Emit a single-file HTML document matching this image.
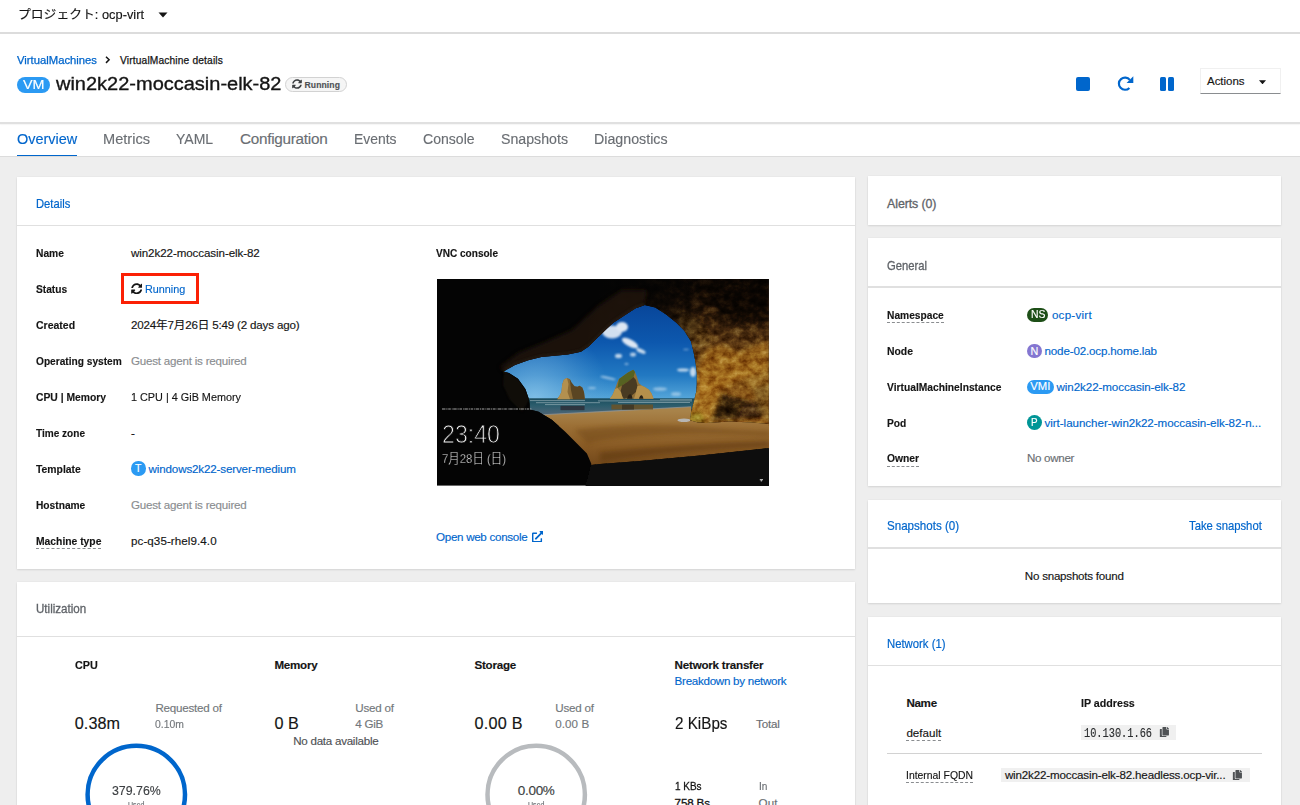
<!DOCTYPE html>
<html lang="ja"><head><meta charset="utf-8"><title>win2k22-moccasin-elk-82 · VirtualMachine details</title>
<style>
html,body{margin:0;padding:0;}
body{width:1300px;height:805px;position:relative;overflow:hidden;background:#fff;font-family:"Liberation Sans","Noto Sans CJK JP",sans-serif;}
body div,body .t,body svg{position:absolute;}
.t{line-height:1;white-space:nowrap;-webkit-text-stroke:.15px;}
</style></head>
<body>
<header>
<div style="left:0px;top:0px;width:1300px;height:32px;background:#fff;"></div>
<div style="left:0px;top:32px;width:1300px;height:1.5px;background:#dcdcdc;"></div>
<span id="t0" class="t" style="top:9.32px;font-size:12.1px;color:#151515;left:18px;transform:scaleX(1.0594);transform-origin:0 50%;">プロジェクト: ocp-virt</span>
<svg style="left:158px;top:12px" width="10" height="6" viewBox="0 0 10 6"><path d="M0.5 0.5h9L5 5.5z" fill="#151515"/></svg>
<a id="t1" class="t" style="top:55.83px;font-size:10.2px;color:#0066cc;left:16.6px;transform:scaleX(1.1065);transform-origin:0 50%;-webkit-text-stroke:.25px;">VirtualMachines</a>
<svg style="left:105px;top:56.300px" width="6" height="9" viewBox="0 0 6 9"><path d="M1 .7l3.100 3.100L1 6.900" fill="none" stroke="#151515" stroke-width="1.500"/></svg>
<span id="t2" class="t" style="top:55.83px;font-size:10.2px;color:#151515;left:120px;letter-spacing:0.160px;-webkit-text-stroke:.25px;">VirtualMachine details</span>
<div style="left:16.600px;top:76.500px;width:33px;height:16px;border-radius:8px;background:#2b9af3"></div>
<span id="t3" class="t" style="top:78.25px;font-size:13px;color:#fff;left:22.5px;transform:scaleX(1.1026);transform-origin:0 50%;">VM</span>
<span id="t4" class="t" style="top:73.58px;font-size:19.2px;color:#151515;left:55.5px;transform:scaleX(1.0416);transform-origin:0 50%;-webkit-text-stroke:0.35px #151515;">win2k22-moccasin-elk-82</span>
<div style="left:285.2px;top:76.700px;width:59.500px;height:13px;border-radius:8px;background:#f5f5f5;border:1px solid #d2d2d2"></div>
<span id="t5" class="t" style="top:81.19px;font-size:8.6px;color:#4f5255;left:304.5px;font-weight:700;letter-spacing:0.094px;">Running</span>
<svg style="left:291.600px;top:79px" width="10" height="10" viewBox="0 0 512 512"><path fill="#3c3f42" d="M370.7 133.3C339.5 104 298.9 88 255.8 88c-77.5.1-144.3 53.2-162.8 126.900-1.300 5.400-6.100 9.200-11.700 9.200H24.100c-7.500 0-13.200-6.800-11.800-14.200C33.900 94.900 134.800 8 256 8c66.400 0 126.800 26.100 171.300 68.700L463 41c15.100-15.100 41-4.400 41 17v134c0 13.300-10.700 24-24 24H346c-21.400 0-32.100-25.900-17-41l41.700-41.700zM32 296h134c21.400 0 32.100 25.900 17 41l-41.800 41.700c31.300 29.300 71.800 45.300 114.900 45.300 77.400-.1 144.300-53.100 162.800-126.800 1.300-5.400 6.100-9.200 11.700-9.200h57.300c7.500 0 13.200 6.800 11.800 14.200C478.100 417.100 377.200 504 256 504c-66.400 0-126.800-26.100-171.300-68.700L49 471c-15.100 15.100-41 4.400-41-17V320c0-13.300 10.700-24 24-24z"/></svg>
<div style="left:1076.200px;top:77px;width:14.300px;height:13.500px;border-radius:2px;background:#0066cc"></div>
<svg style="left:1115px;top:74px" width="20" height="18" viewBox="0 0 20 18"><path d="M14.800 5.900A6.100 6.100 0 1 0 14.400 13.900" fill="none" stroke="#0066cc" stroke-width="2.200"/><path d="M18.300 2.200V8.900H11.600Z" fill="#0066cc"/></svg>
<div style="left:1159.700px;top:77px;width:5.900px;height:13.500px;border-radius:1.500px;background:#0066cc"></div>
<div style="left:1167.800px;top:77px;width:6px;height:13.500px;border-radius:1.500px;background:#0066cc"></div>
<div style="left:1200.300px;top:68.300px;width:80.300px;height:26.200px;background:#fff;border:1px solid #f0f0f0;border-bottom:1px solid #8a8d90;box-sizing:border-box"></div>
<span id="t6" class="t" style="top:75.52px;font-size:11.5px;color:#151515;left:1207px;letter-spacing:-0.031px;">Actions</span>
<svg style="left:1259px;top:79.500px" width="7" height="4.500" viewBox="0 0 10 6"><path d="M0 0h10L5 6z" fill="#151515"/></svg>
<div style="left:0px;top:122.4px;width:1300px;height:1.6px;background:#e0e0e0;box-shadow:0 1px 1px rgba(0,0,0,.04);"></div>
</header>
<nav>
<a id="t7" class="t" style="top:131.19px;font-size:15.3px;color:#0066cc;left:16.7px;transform:scaleX(0.9459);transform-origin:0 50%;">Overview</a>
<span id="t8" class="t" style="top:131.19px;font-size:15.3px;color:#6a6e73;left:103px;transform:scaleX(0.9534);transform-origin:0 50%;">Metrics</span>
<span id="t9" class="t" style="top:131.19px;font-size:15.3px;color:#6a6e73;left:176.4px;transform:scaleX(0.9153);transform-origin:0 50%;">YAML</span>
<span id="t10" class="t" style="top:131.19px;font-size:15.3px;color:#6a6e73;left:240px;letter-spacing:-0.277px;">Configuration</span>
<span id="t11" class="t" style="top:131.19px;font-size:15.3px;color:#6a6e73;left:354px;transform:scaleX(0.9088);transform-origin:0 50%;">Events</span>
<span id="t12" class="t" style="top:131.19px;font-size:15.3px;color:#6a6e73;left:423px;transform:scaleX(0.9194);transform-origin:0 50%;">Console</span>
<span id="t13" class="t" style="top:131.19px;font-size:15.3px;color:#6a6e73;left:501px;transform:scaleX(0.9267);transform-origin:0 50%;">Snapshots</span>
<span id="t14" class="t" style="top:131.19px;font-size:15.3px;color:#6a6e73;left:594.4px;transform:scaleX(0.9307);transform-origin:0 50%;">Diagnostics</span>
<div style="left:16.7px;top:154.6px;width:60.3px;height:1.9px;background:#0066cc;"></div>
<div style="left:0px;top:156.4px;width:1300px;height:1px;background:#dcdcdc;"></div>
</nav>
<main>
<div style="left:0px;top:157.3px;width:1300px;height:660px;background:#eeeeee;"></div>
<section>
<div style="left:16.7px;top:176.7px;width:838px;height:392.2px;background:#fff;box-shadow:0 1px 2px rgba(3,3,3,.10),0 0 2px rgba(3,3,3,.05);"></div>
<a id="t15" class="t" style="top:198.26px;font-size:12.4px;color:#0066cc;left:36.1px;transform:scaleX(0.9056);transform-origin:0 50%;-webkit-text-stroke:.2px #0066cc;">Details</a>
<div style="left:16.7px;top:225.0px;width:838px;height:1.4px;background:#e0e0e0;"></div>
<span id="t16" class="t" style="top:247.24px;font-size:11.6px;color:#151515;left:36px;font-weight:700;transform:scaleX(0.8835);transform-origin:0 50%;">Name</span>
<span id="t17" class="t" style="top:283.17px;font-size:11.6px;color:#151515;left:36px;font-weight:700;transform:scaleX(0.8776);transform-origin:0 50%;">Status</span>
<span id="t18" class="t" style="top:319.10px;font-size:11.6px;color:#151515;left:36px;font-weight:700;transform:scaleX(0.9057);transform-origin:0 50%;">Created</span>
<span id="t19" class="t" style="top:355.03px;font-size:11.6px;color:#151515;left:36px;font-weight:700;transform:scaleX(0.8761);transform-origin:0 50%;">Operating system</span>
<span id="t20" class="t" style="top:390.96px;font-size:11.6px;color:#151515;left:36px;font-weight:700;transform:scaleX(0.8916);transform-origin:0 50%;">CPU | Memory</span>
<span id="t21" class="t" style="top:426.89px;font-size:11.6px;color:#151515;left:36px;font-weight:700;transform:scaleX(0.8675);transform-origin:0 50%;">Time zone</span>
<span id="t22" class="t" style="top:462.82px;font-size:11.6px;color:#151515;left:36px;font-weight:700;transform:scaleX(0.8952);transform-origin:0 50%;">Template</span>
<span id="t23" class="t" style="top:498.75px;font-size:11.6px;color:#151515;left:36px;font-weight:700;transform:scaleX(0.8794);transform-origin:0 50%;">Hostname</span>
<span id="t24" class="t" style="top:534.68px;font-size:11.6px;color:#151515;left:36px;font-weight:700;transform:scaleX(0.8904);transform-origin:0 50%;">Machine type</span>
<div style="left:36px;top:547.5px;width:65.4px;height:0px;background:transparent;border-top:1px dashed #8a8d90;"></div>
<span id="t25" class="t" style="top:247.24px;font-size:11.6px;color:#151515;left:131px;letter-spacing:-0.092px;">win2k22-moccasin-elk-82</span>
<div style="left:121.100px;top:272.800px;width:78px;height:30.800px;box-sizing:border-box;border:3.600px solid #fb2005"></div>
<svg style="left:131px;top:283px" width="11.4" height="11.4" viewBox="0 0 512 512"><path fill="#151515" d="M370.7 133.3C339.5 104 298.9 88 255.8 88c-77.5.1-144.3 53.2-162.8 126.900-1.300 5.400-6.100 9.200-11.700 9.200H24.100c-7.500 0-13.200-6.800-11.800-14.200C33.900 94.900 134.800 8 256 8c66.400 0 126.800 26.100 171.300 68.700L463 41c15.100-15.100 41-4.400 41 17v134c0 13.300-10.700 24-24 24H346c-21.400 0-32.100-25.900-17-41l41.700-41.700zM32 296h134c21.400 0 32.100 25.900 17 41l-41.800 41.700c31.300 29.300 71.800 45.300 114.900 45.300 77.400-.1 144.300-53.100 162.800-126.800 1.300-5.400 6.100-9.200 11.700-9.200h57.300c7.500 0 13.200 6.800 11.800 14.200C478.100 417.100 377.200 504 256 504c-66.400 0-126.800-26.100-171.300-68.700L49 471c-15.100 15.100-41 4.400-41-17V320c0-13.300 10.700-24 24-24z"/></svg>
<a id="t26" class="t" style="top:283.17px;font-size:11.6px;color:#0066cc;left:144.9px;transform:scaleX(0.9328);transform-origin:0 50%;">Running</a>
<span id="t27" class="t" style="top:319.10px;font-size:11.6px;color:#151515;left:131px;letter-spacing:-0.178px;">2024年7月26日 5:49 (2 days ago)</span>
<span id="t28" class="t" style="top:355.03px;font-size:11.6px;color:#8a8d90;left:131px;letter-spacing:-0.219px;">Guest agent is required</span>
<span id="t29" class="t" style="top:390.96px;font-size:11.6px;color:#151515;left:131px;transform:scaleX(0.9347);transform-origin:0 50%;">1 CPU | 4 GiB Memory</span>
<span id="t30" class="t" style="top:426.89px;font-size:11.6px;color:#151515;left:131px;">-</span>
<div style="left:131px;top:461.4px;width:14.500px;height:14.500px;border-radius:50%;background:#2b9af3"></div>
<span id="t31" class="t" style="top:463.45px;font-size:10.5px;color:#fff;left:135px;">T</span>
<a id="t32" class="t" style="top:462.82px;font-size:11.6px;color:#0066cc;left:148.6px;letter-spacing:-0.147px;">windows2k22-server-medium</a>
<span id="t33" class="t" style="top:498.75px;font-size:11.6px;color:#8a8d90;left:131px;letter-spacing:-0.219px;">Guest agent is required</span>
<span id="t34" class="t" style="top:534.68px;font-size:11.6px;color:#151515;left:131px;letter-spacing:0.079px;">pc-q35-rhel9.4.0</span>
<span id="t35" class="t" style="top:247.85px;font-size:11px;color:#151515;left:436px;font-weight:700;transform:scaleX(0.9137);transform-origin:0 50%;">VNC console</span>
<svg style="left:437px;top:279px" width="331.8" height="206.6" viewBox="437 279 331.8 206.6" preserveAspectRatio="none">
<defs>
<linearGradient id="sky" x1="0" y1="305" x2="0" y2="399" gradientUnits="userSpaceOnUse"><stop offset="0" stop-color="#08469a"/><stop offset=".4" stop-color="#0d58ae"/><stop offset=".75" stop-color="#2279c2"/><stop offset="1" stop-color="#55a6da"/></linearGradient>
<radialGradient id="haze" cx="535" cy="398" r="75" gradientUnits="userSpaceOnUse"><stop offset="0" stop-color="#8cc6ea" stop-opacity=".75"/><stop offset=".55" stop-color="#6fb0de" stop-opacity=".4"/><stop offset="1" stop-color="#5aa2d6" stop-opacity="0"/></radialGradient>
<linearGradient id="sea" x1="0" y1="398.500" x2="0" y2="415" gradientUnits="userSpaceOnUse"><stop offset="0" stop-color="#1b4b5d"/><stop offset=".4" stop-color="#2a5c6c"/><stop offset=".7" stop-color="#3d6172"/><stop offset="1" stop-color="#4d6474"/></linearGradient>
<linearGradient id="sand" x1="0" y1="411" x2="0" y2="470" gradientUnits="userSpaceOnUse"><stop offset="0" stop-color="#a8834a"/><stop offset=".25" stop-color="#9c7036"/><stop offset=".6" stop-color="#885a24"/><stop offset="1" stop-color="#6e4519"/></linearGradient>
<linearGradient id="rockv" x1="0" y1="279" x2="0" y2="425" gradientUnits="userSpaceOnUse"><stop offset="0" stop-color="#070503"/><stop offset=".15" stop-color="#150e07"/><stop offset=".3" stop-color="#2e1f0f"/><stop offset=".45" stop-color="#5c401e"/><stop offset=".6" stop-color="#7a5624"/><stop offset=".8" stop-color="#8a6026"/><stop offset="1" stop-color="#8c6126"/></linearGradient>
<linearGradient id="fadeL" x1="545" y1="300" x2="700" y2="345" gradientUnits="userSpaceOnUse"><stop offset="0" stop-color="#040404" stop-opacity="1"/><stop offset=".3" stop-color="#040404" stop-opacity="1"/><stop offset=".45" stop-color="#040404" stop-opacity=".88"/><stop offset=".7" stop-color="#040404" stop-opacity=".6"/><stop offset="1" stop-color="#040404" stop-opacity="0"/></linearGradient>
<linearGradient id="isl" x1="0" y1="0" x2="1" y2="0"><stop offset="0" stop-color="#9a7a3c"/><stop offset=".5" stop-color="#7a5a2a"/><stop offset="1" stop-color="#8a6a3a"/></linearGradient>
<filter id="tex" x="0" y="0" width="100%" height="100%" color-interpolation-filters="sRGB"><feTurbulence type="fractalNoise" baseFrequency=".12 .14" numOctaves="4" seed="11" result="n"/><feColorMatrix in="n" type="matrix" values="1.15 0 0 0 -.03  1.15 0 0 0 -.11  1.15 0 0 0 -.24  0 0 0 0 1" result="g"/><feBlend mode="soft-light" in="g" in2="SourceGraphic" result="o"/><feComposite operator="in" in="o" in2="SourceGraphic"/></filter>
<filter id="b1" x="-20%" y="-20%" width="140%" height="140%"><feGaussianBlur stdDeviation="1.1"/></filter>
<filter id="b2" x="-20%" y="-20%" width="140%" height="140%"><feGaussianBlur stdDeviation="2.2"/></filter>
<filter id="b05" x="-10%" y="-10%" width="120%" height="120%"><feGaussianBlur stdDeviation=".45"/></filter>
<clipPath id="cave"><path clip-rule="evenodd" d="M437 279H768.8V485.6H437Z M503.5 371.5 L515.0 364.9 L528.2 360.3 L541.3 357.0 L554.5 355.7 L567.7 354.4 L580.9 351.7 L588.7 346.5 L598.0 337.3 L606.0 329.4 L613.2 322.8 L626.3 314.2 L635.6 308.3 L644.8 305.0 L655.3 307.6 L665.8 314.2 L676.4 322.8 L684.3 330.7 L690.9 341.2 L693.5 351.7 L695.5 362.3 L696.8 372.8 L696.8 384.0 L696.4 391.0 L694.0 401.0 L691.0 412.0 L689.9 420.3 L698.0 422.5 L706.0 423.0 L730.0 421.5 L752.0 422.5 L769.5 424.0 L769.5 448.0 L700.0 455.5 L640.0 461.0 L600.0 464.0 L591.3 465.0 L591.3 463.8 L586.9 453.5 L576.7 443.3 L565.0 431.5 L551.8 419.8 L538.6 411.8 L529.8 409.6 L529.6 404.0 L529.0 399.3 L525.4 389.0 L518.0 378.8 L509.0 373.0Z"/></clipPath>
<clipPath id="open"><path d="M503.5 371.5 L515.0 364.9 L528.2 360.3 L541.3 357.0 L554.5 355.7 L567.7 354.4 L580.9 351.7 L588.7 346.5 L598.0 337.3 L606.0 329.4 L613.2 322.8 L626.3 314.2 L635.6 308.3 L644.8 305.0 L655.3 307.6 L665.8 314.2 L676.4 322.8 L684.3 330.7 L690.9 341.2 L693.5 351.7 L695.5 362.3 L696.8 372.8 L696.8 384.0 L696.4 391.0 L694.0 401.0 L691.0 412.0 L689.9 420.3 L698.0 422.5 L706.0 423.0 L730.0 421.5 L752.0 422.5 L769.5 424.0 L769.5 448.0 L700.0 455.5 L640.0 461.0 L600.0 464.0 L591.3 465.0 L591.3 463.8 L586.9 453.5 L576.7 443.3 L565.0 431.5 L551.8 419.8 L538.6 411.8 L529.8 409.6 L529.6 404.0 L529.0 399.3 L525.4 389.0 L518.0 378.8 L509.0 373.0Z"/></clipPath>
</defs>
<rect x="437" y="279" width="331.8" height="206.6" fill="#040404"/>
<g clip-path="url(#open)">
<rect x="495" y="300" width="280" height="99" fill="url(#sky)"/>
<rect x="495" y="330" width="150" height="69" fill="url(#haze)"/>
<g fill="#f4f8fc" filter="url(#b1)" opacity=".9">
<ellipse cx="612" cy="332" rx="10" ry="6.500" opacity=".95"/><ellipse cx="622" cy="327" rx="6" ry="5"/><ellipse cx="630" cy="343" rx="9" ry="3.500" transform="rotate(28 630 343)"/><ellipse cx="641" cy="351" rx="5" ry="2" transform="rotate(25 641 351)" opacity=".9"/>
<ellipse cx="618.500" cy="356" rx="3.500" ry="2.200" opacity=".85"/><ellipse cx="633" cy="354.500" rx="3" ry="2" opacity=".8"/><ellipse cx="626.500" cy="364" rx="2" ry="1" opacity=".6"/>
<ellipse cx="683" cy="370" rx="6" ry="1.600" opacity=".85"/><ellipse cx="693" cy="372" rx="3" ry="5" opacity=".85"/><ellipse cx="686" cy="349.500" rx="3" ry=".8" opacity=".5"/>
<ellipse cx="608" cy="378" rx="8" ry="1.400" opacity=".55" transform="rotate(12 608 378)"/><ellipse cx="660" cy="389" rx="7" ry="1.800" opacity=".5"/><ellipse cx="676" cy="394" rx="5" ry="2" opacity=".45"/><ellipse cx="592" cy="388" rx="4" ry="1" opacity=".5"/>
</g>
<rect x="495" y="398.300" width="210" height="18" fill="url(#sea)"/>
<g stroke="#e6eeee" stroke-width=".8" opacity=".5" filter="url(#b05)"><path d="M530 400.600h55M598 400.900h94M536 402.700h64M618 402.500h72M660 399.700h32M545 404.600h40" fill="none"/></g>
<path d="M520 416 L547 414.500 L620 410.600 L691 406.700 L691 418 L775 418 V472 H520Z" fill="url(#sand)"/>
<path d="M525 415.800 L547 414.500 L620 410.600 L691 406.700" fill="none" stroke="#8f979c" stroke-width="1.100" opacity=".7" filter="url(#b05)"/>
<path d="M575 430 Q640 422 700 427 T769 431 V436 Q700 431 640 436 T590 446Z" fill="#6e4416" opacity=".45" filter="url(#b2)"/>
<path d="M600 452 Q680 444 769 441 V447 Q690 449 600 462Z" fill="#5a3610" opacity=".5" filter="url(#b2)"/>
<!-- left island -->
<g filter="url(#b05)">
<path d="M556.800 399.300 L559.500 396 L561.500 392 L562.200 384.500 L564 379.500 L567 377.900 L569.800 379 L571.500 382.500 L574.500 386.300 L577.500 386.800 L579.500 385.800 L582.300 387.500 L584 392 L584.900 399.300Z" fill="#8a6a34"/>
<path d="M557.500 399.300 L561.500 392 L562.200 384.500 L564 379.500 L567 377.900 L568.500 384 L567.500 392 L570 399.300Z" fill="#b39050"/>
<path d="M569.800 379 L571.500 382.500 L574.500 386.300 L577.500 386.800 L579.500 385.800 L582.300 387.500 L584 392 L584.900 399.300 L573 399.300 L571 390Z" fill="#4e3c20" opacity=".8"/>
<path d="M560.500 405.800h24v4.400h-24z" fill="#2c2f30" opacity=".8" filter="url(#b05)"/>
<!-- right island -->
<path d="M609.800 398.800 L612.500 395 L615 389 L617.500 382 L619 379 L622.500 376.500 L628 372.500 L633.300 369.800 L635 372 L637 377 L638.800 383 L641.500 385.500 L645.200 387.200 L649 389.800 L651.500 393.500 L653.600 398.800Z" fill="#8f6f38"/>
<path d="M619 379 L622.500 376.500 L628 372.500 L633.300 369.800 L635 372 L633.500 377 L628 381.500 L622 385.500 L617.500 388Z" fill="#566220"/>
<path d="M622 385.500 L628 381.500 L633.500 377 L636 380 L637.500 386 L636 392 L630 397 L624 398.800 L620 394Z" fill="#3e321c" opacity=".85"/>
<path d="M609.800 398.800 L612.500 395 L615 389 L617.500 388 L621 392 L623 398.800Z" fill="#b8954e"/>
<path d="M637.500 386 L641.500 385.500 L645.200 387.200 L649 389.800 L651.500 393.500 L653.600 398.800 L634 398.800 L636 392Z" fill="#b5904c"/>
<path d="M627 398.800 q1.200-4.500 3.200-4.500 q1.800 0 2.300 4.500Z M639 398.800 q.8-3.600 2.400-3.600 q1.500 0 2 3.600Z" fill="#2a2216"/>
</g>
<path d="M611.400 404.600h41.600v5h-41.600z" fill="#6d5228" opacity=".85" filter="url(#b05)"/>
<path d="M622 404.600h12v5h-12z" fill="#2e2a22" opacity=".6" filter="url(#b05)"/>
<ellipse cx="684" cy="420.300" rx="6.500" ry="1.800" fill="#b9bcc0" opacity=".9"/>
</g>
<!-- right rock wall, lit -->
<g clip-path="url(#cave)">
<g filter="url(#tex)">
<rect x="588" y="279" width="182" height="147" fill="url(#rockv)"/>
<g filter="url(#b2)">
<path d="M697 372 L706 350 L720 345 L740 352 L769 340 V372 L740 380 L715 392 L698 400Z" fill="#b07c2c" opacity=".55"/>
<path d="M691 405 L700 385 L716 388 L722 400 L712 420 L690 420Z" fill="#a87a30" opacity=".7"/>
<path d="M690 414 L700 412 L706 422 L690 421.500Z" fill="#8a8a2a" opacity=".7"/>
<path d="M720.800 393.400 L751.600 401.500 L761 417.600 L710 420.300Z" fill="#2a1c0e" opacity=".9"/>
<path d="M744 405 L758 400 L764 416 L736 419Z" fill="#3a2a18" opacity=".9"/>
<path d="M740 380 L769 366 V400 L760 398Z" fill="#9a7434" opacity=".6"/>
<path d="M752 388 L769 384 V421 L762 415Z" fill="#7a6030" opacity=".8"/>
<path d="M676 323 L690 340 L700 350 L712 340 L700 322 L684 312Z" fill="#6a5228" opacity=".55"/>

<path d="M706 294 L769 288 V322 L728 326Z" fill="#080503" opacity=".55"/>
</g>
</g>
<rect x="437" y="279" width="263" height="147" fill="url(#fadeL)"/>
<path d="M503.5 371.5 L515.0 364.9 L528.2 360.3 L541.3 357.0 L554.5 355.7 L567.7 354.4 L580.9 351.7 L588.7 346.5 L598.0 337.3 L606.0 329.4 L613.2 322.8 L626.3 314.2 L635.6 308.3 L644.8 305.0 L646 290 L622 290 L598 306 L572 330 L545 342 L518 353 L500 367Z" fill="#21170e" opacity=".8" filter="url(#b2)"/>
<path d="M503.5 371.5 L515.0 364.9 L528.2 360.3 L541.3 357.0 L554.5 355.7 L567.7 354.4 L580.9 351.7 L588.7 346.5 L598.0 337.3 L606.0 329.4 L613.2 322.8 L626.3 314.2 L635.6 308.3 L644.8 305.0" fill="none" stroke="#3e2d1c" stroke-width="4" opacity=".45" filter="url(#b1)"/>
<path d="M504 370 L518 379 L525 389 L529 400 L522 412 L510 400 L503 385Z" fill="#1c130a" opacity=".55" filter="url(#b1)"/>
</g>
<!-- bottom shadow -->
<path d="M591 465 L600 464 L640 461 L700 455.500 L770.500 448 V488 H585Z" fill="#0d0d0d" filter="url(#b05)"/>
<path d="M759.800 479.300h3.200v.9h-1.300v1.200h-.9v-1.200h-1z" fill="#e8e8e8"/>
<path d="M442 409h90" stroke="#d8d8d8" stroke-width="1.700" stroke-dasharray="3.500 .8 1.200 .7 2.600 1 .8 .6" opacity=".5"/>
</svg>
<span id="t36" class="t" style="top:420.69px;font-size:26.6px;color:#f6f6f6;left:441.9px;transform:scaleX(0.8714);transform-origin:0 50%;-webkit-text-stroke:1px #060606;">23:40</span>
<span id="t37" class="t" style="top:452.21px;font-size:13.4px;color:#f2f2f2;left:442.3px;transform:scaleX(0.8516);transform-origin:0 50%;-webkit-text-stroke:.4px #060606;">7月28日 (日)</span>
<a id="t38" class="t" style="top:530.74px;font-size:11.6px;color:#0066cc;left:436px;letter-spacing:-0.290px;">Open web console</a>
<svg style="left:531.500px;top:530.500px" width="11.500" height="11.500" viewBox="0 0 512 512"><path fill="#0066cc" d="M432 320h-32a16 16 0 0 0-16 16v112H64V128h144a16 16 0 0 0 16-16V80a16 16 0 0 0-16-16H48a48 48 0 0 0-48 48v352a48 48 0 0 0 48 48h352a48 48 0 0 0 48-48V336a16 16 0 0 0-16-16zM488 0H360c-21.400 0-32.100 25.900-17 41l35.700 35.700L135 320.400a24 24 0 0 0 0 34L157.700 377a24 24 0 0 0 34 0l243.600-243.700L471 169c15 15 41 4.500 41-17V24a24 24 0 0 0-24-24z"/></svg>
</section>
<section>
<div style="left:16.7px;top:581.6px;width:838px;height:240px;background:#fff;box-shadow:0 1px 2px rgba(3,3,3,.10),0 0 2px rgba(3,3,3,.05);"></div>
<span id="t39" class="t" style="top:602.56px;font-size:12.4px;color:#5f6368;left:36.3px;transform:scaleX(0.9345);transform-origin:0 50%;-webkit-text-stroke:.3px;">Utilization</span>
<div style="left:16.7px;top:636.0px;width:838px;height:1.4px;background:#e0e0e0;"></div>
<span id="t40" class="t" style="top:658.84px;font-size:11.6px;color:#151515;left:74.8px;font-weight:700;transform:scaleX(0.9312);transform-origin:0 50%;">CPU</span>
<span id="t41" class="t" style="top:658.84px;font-size:11.6px;color:#151515;left:274.4px;font-weight:700;letter-spacing:-0.245px;">Memory</span>
<span id="t42" class="t" style="top:658.84px;font-size:11.6px;color:#151515;left:474.4px;font-weight:700;letter-spacing:-0.225px;">Storage</span>
<span id="t43" class="t" style="top:658.84px;font-size:11.6px;color:#151515;left:674.6px;font-weight:700;letter-spacing:-0.215px;">Network transfer</span>
<a id="t44" class="t" style="top:675.14px;font-size:11.6px;color:#0066cc;left:674.6px;letter-spacing:-0.275px;">Breakdown by network</a>
<span id="t45" class="t" style="top:714.93px;font-size:16.2px;color:#151515;left:74.8px;letter-spacing:0.040px;">0.38m</span>
<span id="t46" class="t" style="top:701.94px;font-size:11.6px;color:#73777b;left:155.4px;letter-spacing:-0.222px;">Requested of</span>
<span id="t47" class="t" style="top:718.14px;font-size:11.6px;color:#73777b;left:155.4px;transform:scaleX(0.8966);transform-origin:0 50%;">0.10m</span>
<span id="t48" class="t" style="top:714.93px;font-size:16.2px;color:#151515;left:274.4px;letter-spacing:0.062px;">0 B</span>
<span id="t49" class="t" style="top:701.94px;font-size:11.6px;color:#73777b;left:355.3px;letter-spacing:-0.224px;">Used of</span>
<span id="t50" class="t" style="top:718.14px;font-size:11.6px;color:#73777b;left:355.3px;letter-spacing:-0.260px;">4 GiB</span>
<span id="t51" class="t" style="top:735.04px;font-size:11.6px;color:#4f5255;left:293.2px;letter-spacing:-0.258px;">No data available</span>
<span id="t52" class="t" style="top:714.93px;font-size:16.2px;color:#151515;left:474.4px;letter-spacing:0.281px;">0.00 B</span>
<span id="t53" class="t" style="top:701.94px;font-size:11.6px;color:#73777b;left:555.3px;letter-spacing:-0.224px;">Used of</span>
<span id="t54" class="t" style="top:718.14px;font-size:11.6px;color:#73777b;left:555.3px;letter-spacing:0.061px;">0.00 B</span>
<span id="t55" class="t" style="top:714.93px;font-size:16.2px;color:#151515;left:674.6px;transform:scaleX(0.9409);transform-origin:0 50%;">2 KiBps</span>
<span id="t56" class="t" style="top:718.14px;font-size:11.6px;color:#6a6e73;left:756.1px;letter-spacing:-0.220px;">Total</span>
<span id="t57" class="t" style="top:779.54px;font-size:11.6px;color:#151515;left:674.6px;transform:scaleX(0.8598);transform-origin:0 50%;-webkit-text-stroke:.3px;">1 KBs</span>
<span id="t58" class="t" style="top:779.54px;font-size:11.6px;color:#6a6e73;left:758.6px;transform:scaleX(0.8685);transform-origin:0 50%;">In</span>
<span id="t59" class="t" style="top:796.64px;font-size:11.6px;color:#151515;left:674.6px;letter-spacing:-0.152px;-webkit-text-stroke:.3px;">758 Bs</span>
<span id="t60" class="t" style="top:796.64px;font-size:11.6px;color:#6a6e73;left:758.6px;letter-spacing:0.071px;">Out</span>
<svg style="left:80px;top:738px" width="112" height="80" viewBox="0 0 112 80"><circle cx="56.3" cy="56.500" r="48.7" fill="none" stroke="#0066cc" stroke-width="4.500"/></svg>
<svg style="left:480px;top:738px" width="112" height="80" viewBox="0 0 112 80"><circle cx="56.2" cy="56.500" r="48.7" fill="none" stroke="#b8bbbe" stroke-width="4.500"/></svg>
<span id="t61" class="t" style="top:783.73px;font-size:13.5px;color:#3c3f42;left:111.6px;transform:scaleX(0.9156);transform-origin:0 50%;">379.76%</span>
<span id="t62" class="t" style="top:783.73px;font-size:13.5px;color:#3c3f42;left:517.7px;letter-spacing:-0.276px;">0.00%</span>
<span id="t63" class="t" style="top:800.86px;font-size:8.4px;color:#6a6e73;left:127.8px;transform:scaleX(0.8435);transform-origin:0 50%;">Used</span>
<span id="t64" class="t" style="top:800.86px;font-size:8.4px;color:#6a6e73;left:527.7px;transform:scaleX(0.8435);transform-origin:0 50%;">Used</span>
</section>
<aside>
<div style="left:867.8px;top:176.2px;width:413.10000000000014px;height:48.6px;background:#fff;box-shadow:0 1px 2px rgba(3,3,3,.10),0 0 2px rgba(3,3,3,.05);"></div>
<span id="t65" class="t" style="top:197.96px;font-size:12.4px;color:#5f6368;left:887.1px;letter-spacing:-0.117px;-webkit-text-stroke:.3px;">Alerts (0)</span>
<div style="left:867.8px;top:237.7px;width:413.10000000000014px;height:248.7px;background:#fff;box-shadow:0 1px 2px rgba(3,3,3,.10),0 0 2px rgba(3,3,3,.05);"></div>
<span id="t66" class="t" style="top:259.66px;font-size:12.4px;color:#5f6368;left:887.1px;transform:scaleX(0.9049);transform-origin:0 50%;-webkit-text-stroke:.3px;">General</span>
<div style="left:867.8px;top:286.2px;width:413.10000000000014px;height:1.4px;background:#e0e0e0;"></div>
<span id="t67" class="t" style="top:309.04px;font-size:11.6px;color:#151515;left:887.1px;font-weight:700;transform:scaleX(0.8813);transform-origin:0 50%;">Namespace</span>
<span id="t68" class="t" style="top:344.84px;font-size:11.6px;color:#151515;left:887.1px;font-weight:700;transform:scaleX(0.8970);transform-origin:0 50%;">Node</span>
<span id="t69" class="t" style="top:380.74px;font-size:11.6px;color:#151515;left:887.1px;font-weight:700;transform:scaleX(0.8848);transform-origin:0 50%;">VirtualMachineInstance</span>
<span id="t70" class="t" style="top:416.64px;font-size:11.6px;color:#151515;left:887.1px;font-weight:700;transform:scaleX(0.8810);transform-origin:0 50%;">Pod</span>
<span id="t71" class="t" style="top:452.44px;font-size:11.6px;color:#151515;left:887.1px;font-weight:700;transform:scaleX(0.8897);transform-origin:0 50%;">Owner</span>
<div style="left:887.1px;top:322px;width:56.8px;height:0px;background:transparent;border-top:1px dashed #8a8d90;"></div>
<div style="left:887.1px;top:465.5px;width:32.1px;height:0px;background:transparent;border-top:1px dashed #8a8d90;"></div>
<div style="left:1026.900px;top:307.700px;width:21.600px;height:14.4px;border-radius:7.2px;background:#1e4f18"></div>
<span id="t72" class="t" style="top:309.39px;font-size:11.3px;color:#fff;left:1030.5px;transform:scaleX(0.9234);transform-origin:0 50%;">NS</span>
<a id="t73" class="t" style="top:309.04px;font-size:11.6px;color:#0066cc;left:1051.9px;letter-spacing:0.248px;">ocp-virt</a>
<div style="left:1026.900px;top:343.6px;width:14.9px;height:14.9px;border-radius:50%;background:#8476d1"></div>
<span id="t74" class="t" style="top:345.72px;font-size:10.8px;color:#fff;left:1030.5px;letter-spacing:-0.013px;">N</span>
<a id="t75" class="t" style="top:344.84px;font-size:11.6px;color:#0066cc;left:1044.5px;letter-spacing:-0.155px;">node-02.ocp.home.lab</a>
<div style="left:1026.900px;top:379.7px;width:26.7px;height:14.1px;border-radius:7.1px;background:#2b9af3"></div>
<span id="t76" class="t" style="top:381.19px;font-size:11.3px;color:#fff;left:1030.2px;letter-spacing:0.069px;">VMI</span>
<a id="t77" class="t" style="top:380.74px;font-size:11.6px;color:#0066cc;left:1056.6px;letter-spacing:-0.092px;">win2k22-moccasin-elk-82</a>
<div style="left:1026.900px;top:415px;width:14.9px;height:14.9px;border-radius:50%;background:#009596"></div>
<span id="t78" class="t" style="top:417.32px;font-size:10.8px;color:#fff;left:1031.1px;transform:scaleX(0.9163);transform-origin:0 50%;">P</span>
<a id="t79" class="t" style="top:416.64px;font-size:11.6px;color:#0066cc;left:1044.5px;letter-spacing:-0.044px;">virt-launcher-win2k22-moccasin-elk-82-n...</a>
<span id="t80" class="t" style="top:452.44px;font-size:11.6px;color:#6a6e73;left:1026.9px;letter-spacing:-0.291px;">No owner</span>
<div style="left:867.8px;top:499.5px;width:413.10000000000014px;height:103.9px;background:#fff;box-shadow:0 1px 2px rgba(3,3,3,.10),0 0 2px rgba(3,3,3,.05);"></div>
<a id="t81" class="t" style="top:520.16px;font-size:12.4px;color:#0066cc;left:887.1px;transform:scaleX(0.9347);transform-origin:0 50%;-webkit-text-stroke:.2px #0066cc;">Snapshots (0)</a>
<a id="t82" class="t" style="top:520.16px;font-size:12.4px;color:#0066cc;left:1189px;transform:scaleX(0.9111);transform-origin:0 50%;-webkit-text-stroke:.2px #0066cc;">Take snapshot</a>
<div style="left:867.8px;top:547.3px;width:413.10000000000014px;height:1.4px;background:#e0e0e0;"></div>
<span id="t83" class="t" style="top:570.14px;font-size:11.6px;color:#151515;left:1024.8px;letter-spacing:-0.236px;">No snapshots found</span>
<div style="left:867.8px;top:616.9px;width:413.10000000000014px;height:200px;background:#fff;box-shadow:0 1px 2px rgba(3,3,3,.10),0 0 2px rgba(3,3,3,.05);"></div>
<a id="t84" class="t" style="top:637.86px;font-size:12.4px;color:#0066cc;left:887.1px;transform:scaleX(0.9136);transform-origin:0 50%;-webkit-text-stroke:.2px #0066cc;">Network (1)</a>
<div style="left:867.8px;top:665.0px;width:413.10000000000014px;height:1.4px;background:#e0e0e0;"></div>
<span id="t85" class="t" style="top:697.04px;font-size:11.6px;color:#151515;left:906.4px;font-weight:700;letter-spacing:-0.295px;">Name</span>
<span id="t86" class="t" style="top:697.04px;font-size:11.6px;color:#151515;left:1081px;font-weight:700;transform:scaleX(0.9206);transform-origin:0 50%;">IP address</span>
<span id="t87" class="t" style="top:726.84px;font-size:11.6px;color:#151515;left:906.4px;">default</span>
<div style="left:906.4px;top:739.8px;width:34.8px;height:0px;background:transparent;border-top:1px dashed #8a8d90;"></div>
<div style="left:1081px;top:725.2px;width:94.8px;height:14.6px;background:#f0f0f0;"></div>
<span id="t88" class="t" style="top:727.57px;font-size:12.8px;color:#2a2c2e;left:1084.1px;font-family:'Liberation Mono','Noto Sans CJK JP',monospace;transform:scaleX(0.8049);transform-origin:0 50%;">10.130.1.66</span>
<svg style="left:1158.9px;top:727.1px" width="10.8" height="10.4" viewBox="0 0 448 512"><path fill="#4f5255" d="M320 448v40c0 13.300-10.700 24-24 24H24c-13.300 0-24-10.700-24-24V120c0-13.300 10.700-24 24-24h72v296c0 30.900 25.100 56 56 56h168zm0-344V0H152c-13.300 0-24 10.700-24 24v368c0 13.300 10.700 24 24 24h272c13.300 0 24-10.700 24-24V128H344c-13.200 0-24-10.800-24-24zm121-31L375 7A24 24 0 0 0 358.100 0H352v96h96v-6.100a24 24 0 0 0-7-16.900z"/></svg>
<div style="left:887.1px;top:753.2px;width:374.7px;height:1px;background:#d2d2d2;"></div>
<span id="t89" class="t" style="top:768.84px;font-size:11.6px;color:#151515;left:906.4px;transform:scaleX(0.8963);transform-origin:0 50%;">Internal FQDN</span>
<div style="left:906.4px;top:782px;width:67px;height:0px;background:transparent;border-top:1px dashed #8a8d90;"></div>
<div style="left:1001.1px;top:767.5px;width:248.8px;height:14.3px;background:#f0f0f0;"></div>
<span id="t90" class="t" style="top:768.84px;font-size:11.6px;color:#151515;left:1004.9px;letter-spacing:-0.160px;">win2k22-moccasin-elk-82.headless.ocp-vir...</span>
<svg style="left:1232.3px;top:769.5px" width="10.8" height="10.4" viewBox="0 0 448 512"><path fill="#4f5255" d="M320 448v40c0 13.300-10.700 24-24 24H24c-13.300 0-24-10.700-24-24V120c0-13.300 10.700-24 24-24h72v296c0 30.900 25.100 56 56 56h168zm0-344V0H152c-13.300 0-24 10.700-24 24v368c0 13.300 10.700 24 24 24h272c13.300 0 24-10.700 24-24V128H344c-13.200 0-24-10.800-24-24zm121-31L375 7A24 24 0 0 0 358.100 0H352v96h96v-6.100a24 24 0 0 0-7-16.900z"/></svg>
</aside>
</main>
</body></html>
